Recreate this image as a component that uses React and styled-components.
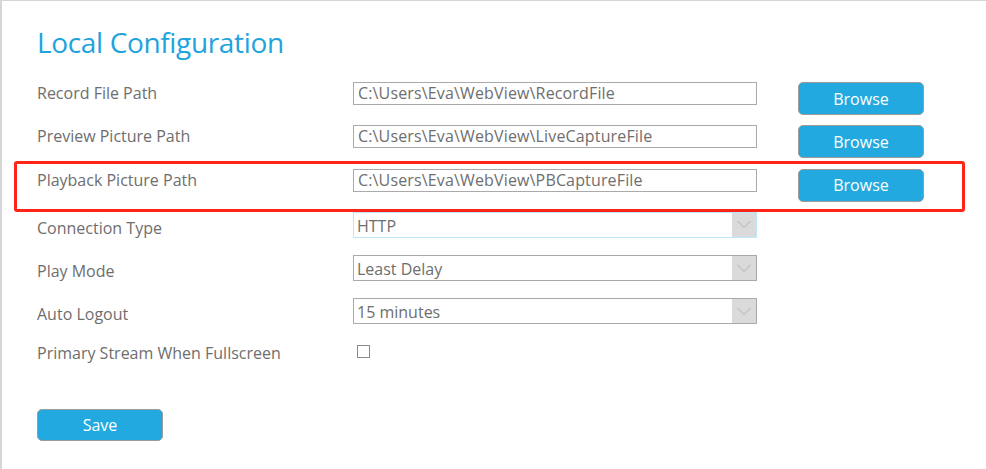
import React from "react";
import styled, { createGlobalStyle, css } from "styled-components";

const GlobalStyle = createGlobalStyle`
  html, body { margin: 0; padding: 0; background: #ffffff; }
  body { font-family: "Open Sans", "Liberation Sans", sans-serif; }
  * { box-sizing: border-box; }
`;

const Frame = styled.div`
  width: 986px;
  height: 469px;
  border-top: 1px solid #d6d6d6;
  border-left: 2px solid #d6d6d6;
  padding-left: 35px;
  overflow: hidden;
`;

const Title = styled.h1`
  margin: 0;
  padding-top: 22px;
  height: 81px;
  font-size: 28px;
  line-height: 38px;
  font-weight: 400;
  color: #1fa3dc;
  letter-spacing: -0.35px;
`;

const Form = styled.div`
  display: flex;
  flex-direction: column;
`;

const Row = styled.div`
  position: relative;
  display: flex;
  align-items: flex-start;
  height: 43.3px;

  ${(p) =>
    p.$highlight &&
    css`
      &::after {
        content: "";
        position: absolute;
        left: -23px;
        top: -8px;
        width: 945px;
        height: 45px;
        border: 3px solid #ff2418;
        border-radius: 3px;
        pointer-events: none;
      }
    `}
`;

const Label = styled.div`
  width: 316px;
  flex: none;
  padding-top: ${(p) => p.$offset || 0}px;
  font-size: 16px;
  line-height: 22px;
  color: #6e6e6e;
  white-space: nowrap;
`;

const PathInput = styled.div`
  width: 404px;
  height: 23px;
  flex: none;
  border: 1px solid #aaaaaa;
  padding-left: 4px;
  font-size: 16px;
  line-height: 21px;
  letter-spacing: 0.15px;
  color: #6e6e6e;
  white-space: nowrap;
  overflow: hidden;
`;

const BlueButton = styled.button`
  width: ${(p) => p.$w || 126}px;
  height: ${(p) => p.$h || 33}px;
  margin-left: ${(p) => p.$ml || 0}px;
  flex: none;
  padding: 0;
  border: 1px solid #9c9c9c;
  border-radius: 5px;
  background: #22aae0;
  color: #ffffff;
  font-family: "Open Sans", "Liberation Sans", sans-serif;
  font-size: 16px;
  line-height: 22px;
  cursor: pointer;
`;

const SelectBox = styled.div`
  width: 404px;
  height: 26px;
  flex: none;
  display: flex;
  border: 1px solid ${(p) => (p.$focused ? "#bde8f7" : "#aaaaaa")};
  background: #ffffff;
`;

const SelectText = styled.div`
  flex: 1;
  padding-left: 3px;
  font-size: 16px;
  line-height: 26px;
  color: #6e6e6e;
  white-space: nowrap;
`;

const SelectArrow = styled.div`
  width: 24px;
  flex: none;
  background: #dadada;
  display: flex;
  align-items: center;
  justify-content: center;
`;

const CheckBox = styled.div`
  width: 13px;
  height: 13px;
  margin-left: 4px;
  margin-top: 3px;
  flex: none;
  border: 1px solid #8a8a8a;
  background: #ffffff;
`;

const Footer = styled.div`
  padding-top: 24px;
`;

const Chevron = () => (
  <svg width="16" height="9" viewBox="0 0 16 9">
    <path d="M1.5 1 L8 7.5 L14.5 1" fill="none" stroke="#b0b0b0" strokeWidth="1" />
  </svg>
);

const paths = [
  { label: "Record File Path", value: "C:\\Users\\Eva\\WebView\\RecordFile" },
  { label: "Preview Picture Path", value: "C:\\Users\\Eva\\WebView\\LiveCaptureFile" },
  { label: "Playback Picture Path", value: "C:\\Users\\Eva\\WebView\\PBCaptureFile", highlight: true },
];

const selects = [
  { label: "Connection Type", value: "HTTP", focused: true },
  { label: "Play Mode", value: "Least Delay" },
  { label: "Auto Logout", value: "15 minutes" },
];

export default function App() {
  return (
    <>
      <GlobalStyle />
      <Frame>
        <Title>Local Configuration</Title>
        <Form>
          {paths.map((p) => (
            <Row key={p.label} $highlight={p.highlight}>
              <Label $offset={0}>{p.label}</Label>
              <PathInput>{p.value}</PathInput>
              <BlueButton $ml={41}>Browse</BlueButton>
            </Row>
          ))}
          {selects.map((s) => (
            <Row key={s.label}>
              <Label $offset={5}>{s.label}</Label>
              <SelectBox $focused={s.focused}>
                <SelectText>{s.value}</SelectText>
                <SelectArrow>
                  <Chevron />
                </SelectArrow>
              </SelectBox>
            </Row>
          ))}
          <Row>
            <Label $offset={0}>Primary Stream When Fullscreen</Label>
            <CheckBox />
          </Row>
        </Form>
        <Footer>
          <BlueButton $w={126} $h={32}>Save</BlueButton>
        </Footer>
      </Frame>
    </>
  );
}
